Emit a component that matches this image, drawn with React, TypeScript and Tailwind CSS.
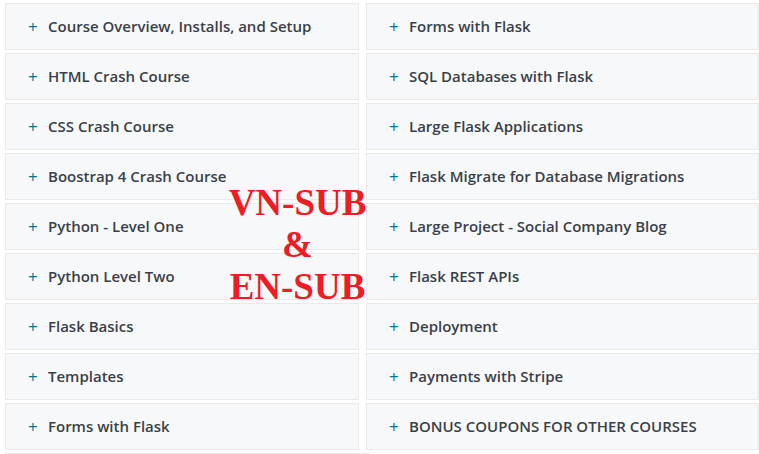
import React from "react";

const left = [
  "Course Overview, Installs, and Setup",
  "HTML Crash Course",
  "CSS Crash Course",
  "Boostrap 4 Crash Course",
  "Python - Level One",
  "Python Level Two",
  "Flask Basics",
  "Templates",
  "Forms with Flask",
];
const right = [
  "Forms with Flask",
  "SQL Databases with Flask",
  "Large Flask Applications",
  "Flask Migrate for Database Migrations",
  "Large Project - Social Company Blog",
  "Flask REST APIs",
  "Deployment",
  "Payments with Stripe",
  "BONUS COUPONS FOR OTHER COURSES",
];

function Row({ title }: { title: string }) {
  return (
    <div className="h-[47px] mb-[3px] bg-[#f7f8fa] border border-[#e8e9eb] flex items-center pl-[22px]">
      <span className="w-[20px] text-[#007791] text-[17px] leading-none">+</span>
      <span className="text-[15px] font-semibold text-[#3a3f47]">{title}</span>
    </div>
  );
}

export default function App() {
  return (
    <div
      className="relative w-[759px] h-[454px] overflow-hidden bg-white pl-[5px] pt-[3px]"
      style={{ fontFamily: '"Open Sans", "Liberation Sans", sans-serif' }}
    >
      <div className="flex gap-[7px]">
        <div className="w-[354px] flex flex-col">
          {left.map((t, i) => (
            <Row key={i} title={t} />
          ))}
          <div className="h-[47px] w-[365px] bg-[#f7f8fa] border border-[#e8e9eb]" />
        </div>
        <div className="w-[393px] flex flex-col">
          {right.map((t, i) => (
            <Row key={i} title={t} />
          ))}
        </div>
      </div>
      <div
        className="absolute left-[197px] top-[182px] w-[201px] text-center font-bold text-[37px] leading-[42px] text-[#ee1d23]"
        style={{ fontFamily: '"Liberation Serif", "Times New Roman", serif' }}
      >
        VN-SUB
        <br />
        &amp;
        <br />
        EN-SUB
      </div>
    </div>
  );
}
